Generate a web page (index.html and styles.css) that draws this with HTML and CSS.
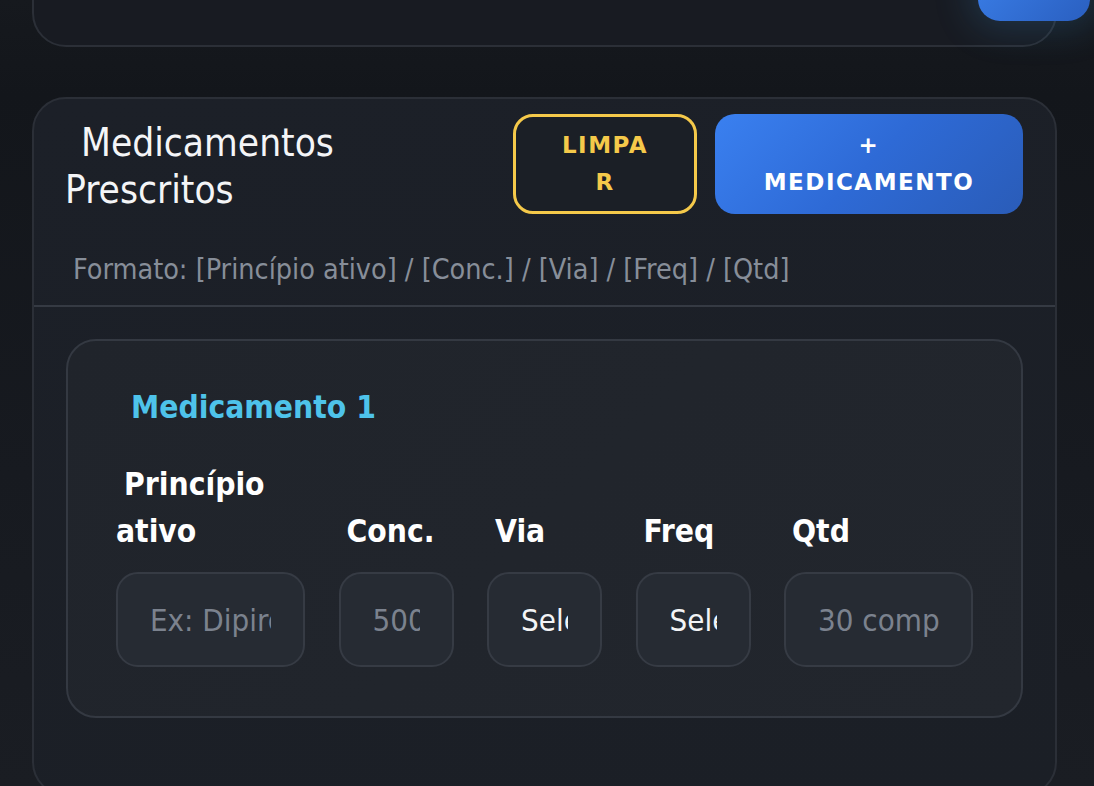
FILE: index.html
```html
<!DOCTYPE html>
<html lang="pt">
<head>
<meta charset="utf-8">
<title>Medicamentos Prescritos</title>
<link rel="stylesheet" href="styles.css">
</head>
<body>
<div class="page">
  <section class="card card-top"></section>
  <button class="fab" type="button" aria-label="Ação"></button>

  <section class="card card-meds">
    <header class="meds-header">
      <h2 class="meds-title">Medicamentos Prescritos</h2>
      <div class="meds-actions">
        <button class="btn btn-clear" type="button">LIMPAR</button>
        <button class="btn btn-add" type="button">+ MEDICAMENTO</button>
      </div>
    </header>
    <p class="meds-format">Formato: [Princípio ativo] / [Conc.] / [Via] / [Freq] / [Qtd]</p>
    <div class="meds-body">
      <div class="med-item">
        <h3 class="med-title">Medicamento 1</h3>
        <div class="med-grid">
          <label class="field">
            <span class="field-label indent">Princípio ativo</span>
            <input class="field-input" type="text" placeholder="Ex: Dipirona">
          </label>
          <label class="field">
            <span class="field-label indent">Conc.</span>
            <input class="field-input" type="text" placeholder="500mg">
          </label>
          <label class="field">
            <span class="field-label indent">Via</span>
            <select class="field-input field-select"><option>Selecione</option></select>
          </label>
          <label class="field">
            <span class="field-label indent">Freq</span>
            <select class="field-input field-select"><option>Selecione</option></select>
          </label>
          <label class="field">
            <span class="field-label indent">Qtd</span>
            <input class="field-input" type="text" placeholder="30 comp">
          </label>
        </div>
      </div>
    </div>
  </section>
</div>
</body>
</html>
```
FILE: styles.css
```css
* { box-sizing: border-box; }

html, body {
  margin: 0;
  height: 100%;
}

body {
  background: linear-gradient(180deg, #16191e 0%, #13161b 12%, #171a20 60%, #1a1d23 100%);
  font-family: "DejaVu Sans Condensed", "DejaVu Sans", sans-serif;
  color: #f2f3f5;
  overflow: hidden;
}

.page {
  position: relative;
  display: flow-root;
  padding: 0 37px 0 32px;
}

.card {
  border: 2px solid #2b2f37;
  border-radius: 34px;
}

.card-top {
  height: 120px;
  margin-top: -73px;
  background: #181b22;
}

.fab {
  position: absolute;
  top: -40px;
  left: 978px;
  width: 112px;
  height: 61px;
  border: none;
  border-radius: 22px;
  background: linear-gradient(135deg, #3b80ea, #2a5fc0);
  box-shadow: 0 0 36px 8px rgba(60, 140, 200, 0.22);
}

.card-meds {
  margin-top: 50px;
  height: 699px;
  background: linear-gradient(170deg, #1c2028 0%, #1b1f26 100%);
}

.meds-header {
  display: flex;
  align-items: center;
  justify-content: space-between;
  padding: 15px 32px 0 31px;
}

.meds-title {
  margin: 0;
  padding-top: 4px;
  width: 430px;
  font-weight: normal;
  font-size: 38.5px;
  line-height: 47px;
  text-indent: 16px;
  color: #f4f5f7;
}

.meds-actions {
  display: flex;
  gap: 18px;
}

.btn {
  height: 100px;
  border-radius: 20px;
  font-family: "DejaVu Sans", sans-serif;
  font-weight: bold;
  font-size: 23px;
  line-height: 37px;
  letter-spacing: 1.5px;
  text-align: center;
  cursor: pointer;
}

.btn-clear {
  width: 184px;
  padding: 0 40px;
  border: 3px solid #f5c94a;
  background: #1b1f26;
  color: #f5c94a;
  word-break: break-all;
}

.btn-add {
  width: 308px;
  padding: 0 36px;
  border: none;
  background: linear-gradient(135deg, #3a80f0 0%, #2e6ad6 50%, #2a5cb8 100%);
  color: #ffffff;
}

.meds-format {
  margin: 36px 0 0;
  padding: 0 32px 15px 39px;
  font-size: 28.5px;
  line-height: 40px;
  color: #878e99;
  border-bottom: 2px solid #353a43;
}

.meds-body {
  padding: 32px 32px;
}

.med-item {
  border: 2px solid #343942;
  border-radius: 30px;
  background: linear-gradient(135deg, #20242b 0%, #22262d 100%);
  padding: 46px 48px 49px;
}

.med-title {
  margin: 0 0 34px;
  padding-left: 15px;
  font-size: 31.5px;
  line-height: 40px;
  font-weight: bold;
  color: #4ec3ea;
}

.med-grid {
  display: grid;
  grid-template-columns: 189px 115px 115px 115px 189px;
  column-gap: 33.5px;
  align-items: end;
}

.field {
  display: flex;
  flex-direction: column;
  justify-content: flex-end;
}

.field-label {
  display: block;
  font-weight: bold;
  font-size: 31.5px;
  line-height: 47px;
  color: #ffffff;
  margin-bottom: 17px;
}

.indent { text-indent: 8px; }

.field-input {
  width: 100%;
  height: 95px;
  padding: 0 32px;
  border: 2px solid #363b44;
  border-radius: 22px;
  background: #262b33;
  color: #f3f4f6;
  font-family: "DejaVu Sans Condensed", "DejaVu Sans", sans-serif;
  font-size: 31px;
  outline: none;
}

.field-input::placeholder {
  color: #7b828e;
}

.field-select {
  appearance: none;
  -webkit-appearance: none;
}
```
